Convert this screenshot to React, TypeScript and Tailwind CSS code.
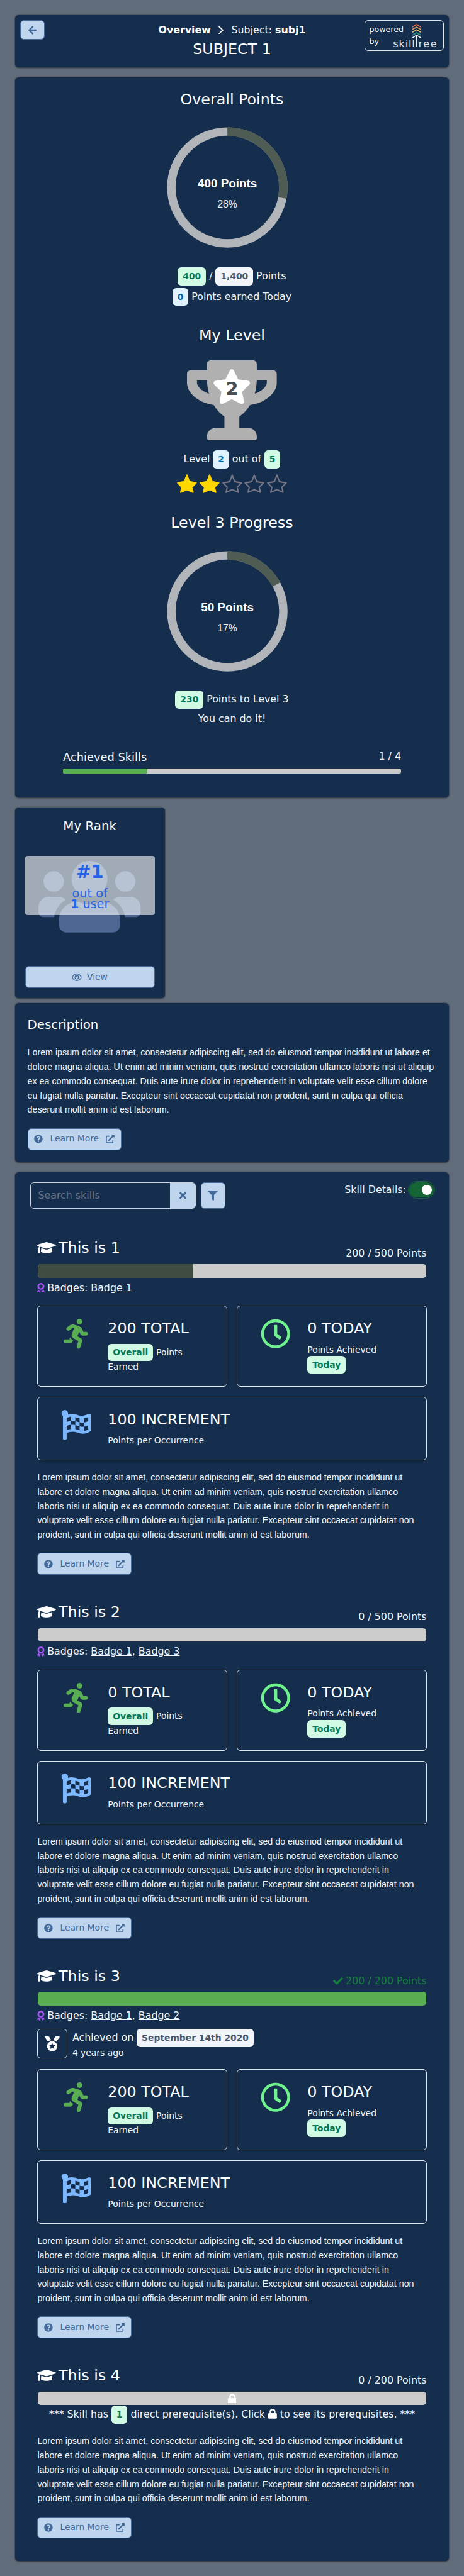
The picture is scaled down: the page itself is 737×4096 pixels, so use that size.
import React from "react";
import {
  FaTrophy,
  FaStar,
  FaUsers,
  FaGraduationCap,
  FaAward,
  FaRunning,
  FaRegClock,
  FaFlagCheckered,
  FaQuestionCircle,
  FaExternalLinkAlt,
  FaTimes,
  FaFilter,
  FaCheck,
  FaMedal,
  FaLock,
  FaArrowLeft,
} from "react-icons/fa";
import { FaRegEye } from "react-icons/fa6";

const PARAGRAPH =
  "Lorem ipsum dolor sit amet, consectetur adipiscing elit, sed do eiusmod tempor incididunt ut labore et dolore magna aliqua. Ut enim ad minim veniam, quis nostrud exercitation ullamco laboris nisi ut aliquip ex ea commodo consequat. Duis aute irure dolor in reprehenderit in voluptate velit esse cillum dolore eu fugiat nulla pariatur. Excepteur sint occaecat cupidatat non proident, sunt in culpa qui officia deserunt mollit anim id est laborum.";

const TONES = {
  success: "bg-[#d1fae5] text-[#047857]",
  info: "bg-[#e0f2fe] text-[#0369a1]",
  secondary: "bg-[#f1f5f9] text-[#475569]",
};

function Tag({ tone, small, children }: { tone: keyof typeof TONES; small?: boolean; children: React.ReactNode }) {
  return (
    <span
      className={`inline-flex items-center rounded-md px-2 text-sm leading-[21px] font-bold ${small ? "h-7" : "h-[29px]"} ${TONES[tone]}`}
    >
      {children}
    </span>
  );
}

function Card({ className, children }: { className: string; children: React.ReactNode }) {
  return (
    <section
      className={`rounded-md bg-[#152e4d] shadow-[0_1px_3px_rgba(0,0,0,0.5),0_1px_2px_-1px_rgba(0,0,0,0.4)] ${className}`}
    >
      {children}
    </section>
  );
}

function Ring({ percent, label }: { percent: number; label: string }) {
  return (
    <div className="mr-[15px] flex justify-center">
      <svg width="194" height="194" viewBox="0 0 194 194">
        <circle cx="97" cy="97" r="89.8" fill="none" stroke="#b1b4b9" strokeWidth="13.6" />
        <circle
          cx="97"
          cy="97"
          r="89.8"
          fill="none"
          stroke="#4f5c54"
          strokeWidth="14"
          pathLength="100"
          strokeDasharray={`${percent} 100`}
          transform="rotate(-90 97 97)"
        />
        <text
          x="97"
          y="97"
          textAnchor="middle"
          fill="#ffffff"
          className="font-['Liberation_Sans',sans-serif] text-[19px] font-bold"
        >
          {label}
        </text>
        <text
          x="97"
          y="129"
          textAnchor="middle"
          fill="#f1f1f1"
          className="font-['Liberation_Sans',sans-serif] text-[16px]"
        >
          {percent}%
        </text>
      </svg>
    </div>
  );
}

function LearnMore() {
  return (
    <button className="flex h-[35px] w-[151px] items-center justify-between rounded-md border border-[#416a9a] bg-[#bfd4ed] px-2.5 text-sm text-[#416a9a]">
      <FaQuestionCircle size={14} />
      <span>Learn More</span>
      <FaExternalLinkAlt size={14} />
    </button>
  );
}

function LevelStar({ filled }: { filled: boolean }) {
  return (
    <svg width="32" height="32" viewBox="0 0 32 32">
      <path
        d="M16 2.4 L20 13 L30.8 15 L24 21.9 L25.9 30 L16 25.7 L6.1 30 L8 21.9 L1.2 15 L12 13 Z"
        fill={filled ? "#ffd700" : "none"}
        stroke={filled ? "#ffd700" : "#757585"}
        strokeWidth="2.1"
        strokeLinejoin="round"
      />
    </svg>
  );
}

function SkillTreeLogo() {
  return (
    <svg className="absolute top-[3px] right-[7px]" width="74" height="44" viewBox="162 36 222 132">
      <g fill="none" strokeWidth="5">
        <path d="M256 57 L276 45 L297 57" stroke="#e76f51" />
        <path d="M256 69 L276 57.5 L297 69" stroke="#f4a261" />
        <path d="M256 82 L276 70.5 L297 82" stroke="#e9c46a" />
        <path d="M256 96.5 L276 84.5 L297 96.5" stroke="#2a9d8f" />
        <path d="M256 109 L276 96.5 L297 109 M276 97 V154" stroke="#f1f5f9" />
      </g>
      <g fill="#dfe5ea" className="font-['DejaVu_Sans',sans-serif] text-[49px]">
        <text x="163" y="154" textLength="104">
          skill
        </text>
        <text x="285" y="154" textLength="88">
          ree
        </text>
      </g>
    </svg>
  );
}

function StatCard({
  icon,
  title,
  className,
  children,
}: {
  icon: React.ReactNode;
  title: string;
  className: string;
  children: React.ReactNode;
}) {
  return (
    <div className={`flex rounded-md border border-[#e2e8f0] shadow-[0_1px_3px_rgba(0,0,0,0.3)] ${className}`}>
      <div className="mt-5 flex h-12 w-[112px] justify-center pl-[9px]">{icon}</div>
      <div className="flex-1 pt-[18px] text-sm text-[#f4f7fa]">
        <h4 className="mb-1.5 text-2xl leading-9 text-white">{title}</h4>
        {children}
      </div>
    </div>
  );
}

type Skill = {
  name: string;
  earned: string;
  percent: number;
  color: string;
  badges: string[];
  total?: string;
  done?: boolean;
  locked?: boolean;
};

const SKILLS: Skill[] = [
  { name: "This is 1", earned: "200 / 500 Points", percent: 40, color: "#3f4c42", badges: ["Badge 1"], total: "200" },
  { name: "This is 2", earned: "0 / 500 Points", percent: 0, color: "#3f4c42", badges: ["Badge 1", "Badge 3"], total: "0" },
  {
    name: "This is 3",
    earned: "200 / 200 Points",
    percent: 100,
    color: "#59ad52",
    badges: ["Badge 1", "Badge 2"],
    total: "200",
    done: true,
  },
  { name: "This is 4", earned: "0 / 200 Points", percent: 0, color: "#3f4c42", badges: [], locked: true },
];

function SkillRow({ skill }: { skill: Skill }) {
  return (
    <article className="px-9">
      <div className="flex h-[43px] justify-between">
        <h3 className="flex items-start text-2xl leading-9 text-white">
          <FaGraduationCap className="mt-[5px] mr-1 h-6 w-[30px]" />
          {skill.name}
        </h3>
        <div className={`mt-[13.5px] flex h-6 items-center ${skill.done ? "text-[#15803d]" : ""}`}>
          {skill.done && <FaCheck className="mr-1" size={16} />}
          {skill.earned}
        </div>
      </div>
      <div className="mx-px flex h-[22px] overflow-hidden rounded-[5px] bg-[#cccccc]">
        <div className="h-full" style={{ width: `${skill.percent}%`, backgroundColor: skill.color }} />
        {skill.locked && (
          <div className="flex flex-1 items-center justify-center text-white">
            <FaLock className="h-4 w-3.5" />
          </div>
        )}
      </div>
      {skill.badges.length > 0 && (
        <div className="mt-1 flex h-6 items-center">
          <FaAward className="mr-1 h-4 w-3 text-[#a855f7]" />
          <span>
            Badges:{" "}
            {skill.badges.map((badge, i) => (
              <React.Fragment key={badge}>
                {i > 0 && ", "}
                <a className="underline">{badge}</a>
              </React.Fragment>
            ))}
          </span>
        </div>
      )}
      {skill.done && (
        <div className="mt-[9px] flex h-12">
          <div className="mr-2 flex w-12 items-center justify-center rounded-md border border-[#e2e8f0] text-white">
            <FaMedal size={24} />
          </div>
          <div>
            <div className="flex h-[27px] items-baseline gap-[5px]">
              <span>Achieved on</span>
              <Tag tone="secondary">September 14th 2020</Tag>
            </div>
            <div className="text-sm leading-6">4 years ago</div>
          </div>
        </div>
      )}
      {skill.locked && (
        <div className="mt-px flex h-[29px] items-baseline justify-center gap-[5px] whitespace-nowrap">
          <span>*** Skill has</span>
          <Tag tone="success">1</Tag>
          <span>direct prerequisite(s). Click</span>
          <FaLock className="mt-[4.5px] h-4 w-3.5 self-start text-white" />
          <span>to see its prerequisites. ***</span>
        </div>
      )}
      {skill.total && (
        <div className="mt-[17px] grid grid-cols-2 gap-4">
          <StatCard
            className="h-[130px]"
            title={`${skill.total} TOTAL`}
            icon={<FaRunning className="h-12 w-[39px] text-[#59ad52]" />}
          >
            <div className="flex h-[26px] items-start gap-[5px] leading-7">
              <Tag tone="success" small>
                Overall
              </Tag>
              Points
            </div>
            <div className="leading-6">Earned</div>
          </StatCard>
          <StatCard className="h-[130px]" title="0 TODAY" icon={<FaRegClock size={48} className="text-[#6df28c]" />}>
            <div className="leading-5">Points Achieved</div>
            <div className="flex">
              <Tag tone="success" small>
                Today
              </Tag>
            </div>
          </StatCard>
          <StatCard
            className="col-span-2 h-[102px]"
            title="100 INCREMENT"
            icon={<FaFlagCheckered size={48} className="text-[#7cb8ff]" />}
          >
            <div className="leading-5">Points per Occurrence</div>
          </StatCard>
        </div>
      )}
      <p className="mt-[16.4px] mb-[17.6px] font-['Liberation_Sans',sans-serif] text-[14.4px] leading-[23px]">
        {PARAGRAPH}
      </p>
      <LearnMore />
    </article>
  );
}

export default function App() {
  return (
    <div className="h-[4135px] w-[744px] bg-[#626d7c] p-6 font-['DejaVu_Sans',sans-serif] text-base text-[#f4f7fa] [zoom:0.9906]">
      <Card className="flex h-[84px] justify-between p-2">
        <button className="flex h-8 w-10 items-center justify-center rounded-md border border-[#416a9a] bg-[#bfd4ed] text-[#416a9a]">
          <FaArrowLeft className="h-4 w-3.5" />
        </button>
        <div className="ml-[88px] flex-1 text-center">
          <div className="mt-1 flex h-6 items-center justify-center">
            <strong className="text-white">Overview</strong>
            <svg className="mr-3 ml-[11px]" width="10" height="14" viewBox="0 0 10 14" fill="none">
              <path d="M1.5 1 L8 7 L1.5 13" stroke="#f4f7fa" strokeWidth="1.8" />
            </svg>
            <span>
              Subject: <strong className="text-white">subj1</strong>
            </span>
          </div>
          <h1 className="mt-[1.5px] text-2xl leading-9 text-white">SUBJECT 1</h1>
        </div>
        <div className="relative h-[50px] w-32 rounded-md border border-[#e2e8f0] pt-1 pl-[7px] text-[12.8px] leading-[19.6px]">
          powered
          <br />
          by
          <SkillTreeLogo />
        </div>
      </Card>

      <Card className="mt-4 h-[1156px] pt-5 text-center">
        <h2 className="h-[60px] text-2xl leading-8 text-white">Overall Points</h2>
        <Ring percent={28} label="400 Points" />
        <div className="mt-[31px] flex h-[33px] items-baseline justify-center gap-[5px]">
          <Tag tone="success">400</Tag>
          <span>/</span>
          <Tag tone="secondary">1,400</Tag>
          <span>Points</span>
        </div>
        <div className="flex h-[29px] items-baseline justify-center gap-[5px]">
          <Tag tone="info">0</Tag>
          <span>Points earned Today</span>
        </div>
        <h2 className="mt-8 h-14 text-2xl leading-8 text-white">My Level</h2>
        <div className="relative flex h-32 justify-center">
          <FaTrophy className="h-32 w-36 text-[#b0b0b0]" />
          <div className="absolute top-3.5 flex h-14 w-[63px] items-center justify-center">
            <FaStar className="absolute h-14 w-[63px] text-white" />
            <span className="relative pt-2 text-[29px] leading-9 font-bold text-[#495057]">2</span>
          </div>
        </div>
        <div className="mt-4 flex h-[29px] items-baseline justify-center gap-[5px]">
          <span>Level</span>
          <Tag tone="info">2</Tag>
          <span>out of</span>
          <Tag tone="success">5</Tag>
        </div>
        <div className="mt-2 flex h-8 justify-center gap-1">
          {[1, 2, 3, 4, 5].map((n) => (
            <LevelStar key={n} filled={n <= 2} />
          ))}
        </div>
        <h2 className="mt-8 h-[60px] text-2xl leading-8 text-white">Level 3 Progress</h2>
        <Ring percent={17} label="50 Points" />
        <div className="mt-[31px] flex h-[29px] items-baseline justify-center gap-[5px]">
          <Tag tone="success">230</Tag>
          <span>Points to Level 3</span>
        </div>
        <div className="mt-1 leading-6">You can do it!</div>
        <div className="mx-[77px] mt-9 flex h-8 justify-between">
          <span className="text-[18px] leading-[27px]">Achieved Skills</span>
          <span>1 / 4</span>
        </div>
        <div className="mx-[77px] h-2 overflow-hidden rounded-[3px] bg-[#cccccc]">
          <div className="h-full w-1/4 bg-[#59ad52]" />
        </div>
      </Card>

      <Card className="mt-4 flex h-[306px] w-60 flex-col items-center px-4">
        <h2 className="h-[78px] pt-4 text-xl leading-7 text-white">My Rank</h2>
        <div className="relative flex h-[131px] w-full justify-center">
          <FaUsers className="h-[131px] w-[164px] text-[#4c6791]" />
          <div className="absolute top-0 left-0 h-[95px] w-full rounded bg-white/60 pt-[6.5px] text-center text-[19.4px] leading-[18px] text-[#2563eb]">
            <div className="mb-[4.5px] text-[28.8px] leading-10 font-bold">#1</div>
            <div>out of</div>
            <div>
              <strong>1</strong> user
            </div>
          </div>
        </div>
        <button className="mt-[46px] flex h-[35px] w-full items-center justify-center gap-2 rounded-md border border-[#416a9a] bg-[#bfd4ed] text-sm text-[#416a9a]">
          <FaRegEye className="h-3.5 w-4" />
          View
        </button>
      </Card>

      <Card className="mt-2 h-64 px-5 pt-[21px]">
        <h2 className="h-[47px] text-xl leading-7 text-white">Description</h2>
        <p className="mb-[18px] font-['Liberation_Sans',sans-serif] text-[14.4px] leading-[23px]">{PARAGRAPH}</p>
        <LearnMore />
      </Card>

      <Card className="mt-4 h-[2229px] pt-4">
        <div className="flex h-[88px] px-6">
          <div className="flex h-[42px] w-[266px] overflow-hidden rounded-md border border-[#cbd5e1]">
            <span className="flex-1 px-3 leading-10 text-[#64748b]">Search skills</span>
            <span className="flex w-10 items-center justify-center bg-[#bfd4ed] text-[#416a9a]">
              <FaTimes className="h-4 w-[11px]" />
            </span>
          </div>
          <button className="ml-2 flex h-[42px] w-[39px] items-center justify-center rounded-md border border-[#416a9a] bg-[#bfd4ed] text-[#416a9a]">
            <FaFilter size={16} />
          </button>
          <span className="ml-auto leading-6">Skill Details:</span>
          <span className="ml-[5px] flex h-6 w-10 items-center justify-end rounded-full bg-[#166534] p-1 outline outline-offset-2 outline-[#166534]">
            <span className="h-4 w-4 rounded-full bg-white" />
          </span>
        </div>
        <div className="flex flex-col gap-[42.4px]">
          {SKILLS.map((skill) => (
            <SkillRow key={skill.name} skill={skill} />
          ))}
        </div>
      </Card>
    </div>
  );
}
